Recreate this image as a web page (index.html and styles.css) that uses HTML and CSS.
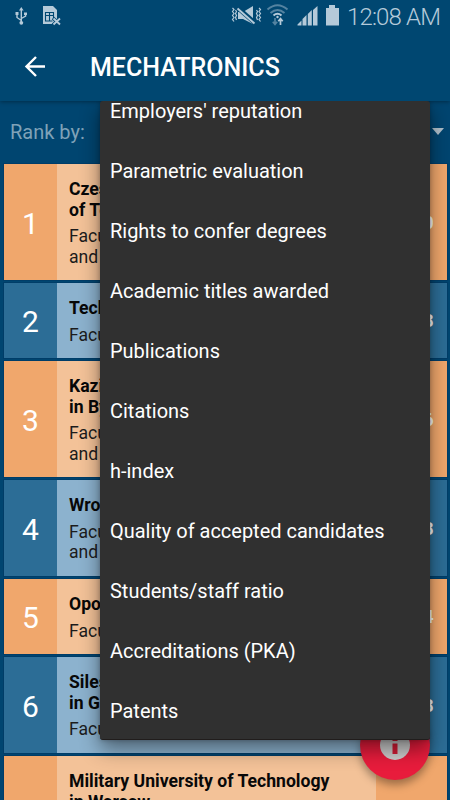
FILE: index.html
```html
<!DOCTYPE html>
<html lang="en">
<head>
<meta charset="utf-8">
<title>Mechatronics</title>
<link rel="stylesheet" href="styles.css">
</head>
<body>
<div class="screen">
  <header class="header">
    <div class="status">
      <svg class="status-left" width="64" height="32" viewBox="0 0 64 32" fill="none" stroke="#b5cad9" stroke-width="1.4">
        <path d="M21.3 10v13M21.3 20.5l-4.3-3v-3.5M21.3 18.5l4.3-2.500v-3"/>
        <path d="M21.300 7l2.300 3.500h-4.600zM15.500 12h3v3h-3zM24 12.500h3v2.500h-3z" fill="#b5cad9" stroke="none"/>
        <circle cx="21.300" cy="22.800" r="1.900" fill="#b5cad9" stroke="none"/>
        <path d="M43 6h10l4 4v9l-4 5H43z" fill="#b5cad9" stroke="none"/>
        <path d="M45.500 12.500h8.500M45.500 12v9.500M45.500 15.500h8M45.500 21h7M49.500 13v8M53.500 12v6" stroke="#004771" stroke-width="1.100"/>
        <path d="M53 18l7 7M60 18l-7 7" stroke="#004771" stroke-width="3.500"/>
        <path d="M53.500 18.500l6.500 6M60 18.500l-6.500 6" stroke-width="1.900"/>
      </svg>
      <div class="status-right">
        <svg width="115" height="32" viewBox="230 0 115 32" fill="none" stroke="#b5cad9">
          <path d="M232.500 8l1.500 1.500-1.500 2 1.500 2-1.500 2 1.500 2-1.500 2 1.500 2M235.500 10l1 1.500-1 2 1 2-1 2 1 2.500M256.500 10l1 1.500-1 2 1 2-1 2 1 2.500M259 8l1.500 1.500-1.500 2 1.500 2-1.500 2 1.500 2-1.500 2 1.500 2" stroke-width="1.200"/>
          <path d="M238 12h5l10-6v18l-10-5h-5z" fill="#b5cad9" stroke="none"/>
          <path d="M238.500 8.500l16 14" stroke="#004771" stroke-width="4.500"/>
          <path d="M237.500 8.500l17 15" stroke-width="1.900"/>
          <path d="M267.500 9.500q10-8.500 20 0" stroke="#5483a1" stroke-width="2"/>
          <path d="M270.500 13q7-6 14 0" stroke="#5483a1" stroke-width="2"/>
          <path d="M273.500 15.500q4-3.500 8 0" stroke-width="2"/>
          <circle cx="277.500" cy="17" r="1.200" fill="#b5cad9" stroke="none"/>
          <path d="M275 18v6M272.800 21.800l2.200 2.700 2.200-2.700" stroke="#5483a1" stroke-width="1.700"/>
          <path d="M280.500 25v-6M278.300 21.200l2.200-2.700 2.200 2.700" stroke-width="1.700"/>
          <path d="M297.500 25.500v-1l4-4v5zM302.500 25.500v-6.500l4-4v10.500zM307.800 25.500v-11.500l4-4v15.500zM313 25.500v-15.500l4.500-4v19.500z" fill="#b5cad9" stroke="none"/>
          <path d="M326 8h3V5h6v3h4v17.500h-13z" fill="#b5cad9" stroke="none"/>
        </svg>
        <span class="clock">12:08 AM</span>
      </div>
    </div>
    <div class="toolbar">
      <svg class="back" width="22" height="22" viewBox="0 0 22 22" fill="none" stroke="#fff" stroke-width="2.400"><path d="M21 10.500H3M12 1L2.500 10.500l9.500 9.500"/></svg>
      <h1>MECHATRONICS</h1>
    </div>
  </header>
  <div class="rankby"><span>Rank by:</span><i class="caret"></i></div>
  <main class="list">
    <article class="row orange r3"><div class="rank">1</div><div class="info"><h2>Czestochowa<br>of Technology</h2><p>Faculty<br>and</p></div><div class="score">100.0</div></article>
    <article class="row blue r1"><div class="rank">2</div><div class="info"><h2>Technical</h2><p>Faculty</p></div><div class="score">98.8</div></article>
    <article class="row orange r3"><div class="rank">3</div><div class="info"><h2>Kazimierz<br>in Bydgoszcz</h2><p>Faculty<br>and</p></div><div class="score">97.6</div></article>
    <article class="row blue r2"><div class="rank">4</div><div class="info"><h2>Wroclaw</h2><p>Faculty<br>and</p></div><div class="score">95.8</div></article>
    <article class="row orange r1"><div class="rank">5</div><div class="info"><h2>Opole</h2><p>Faculty</p></div><div class="score">94.4</div></article>
    <article class="row blue r2"><div class="rank">6</div><div class="info"><h2>Silesian<br>in Gliwice</h2><p>Faculty</p></div><div class="score">93.8</div></article>
    <article class="row orange r3"><div class="rank"></div><div class="info"><h2>Military University of Technology<br>in Warsaw</h2></div><div class="score"></div></article>
  </main>
  <div class="fab">
    <svg width="30" height="30" viewBox="0 0 30 30"><circle cx="15" cy="15" r="15" fill="#ccc"/><path d="M12.500 7h5v4h-5zM12.500 13.500h5V24h-5z" fill="#d01c35"/></svg>
  </div>
  <div class="menu-clip">
  <ul class="menu">
    <li>Employers' reputation</li>
    <li>Parametric evaluation</li>
    <li>Rights to confer degrees</li>
    <li>Academic titles awarded</li>
    <li>Publications</li>
    <li>Citations</li>
    <li>h-index</li>
    <li>Quality of accepted candidates</li>
    <li>Students/staff ratio</li>
    <li>Accreditations (PKA)</li>
    <li>Patents</li>
  </ul>
  </div>
</div>
</body>
</html>
```
FILE: styles.css
```css
* { box-sizing: border-box; }
body, h1, h2, p, ul { margin: 0; padding: 0; }
body { font-family: Roboto, "Liberation Sans", sans-serif; overflow: hidden; }
.screen { position: relative; width: 450px; height: 800px; overflow: hidden; background: #004570; }
.header { height: 101px; background: #004771; box-shadow: 0 1px 4px rgba(0, 0, 0, .35); }
.status { height: 32px; display: flex; justify-content: space-between; }
.status-right { display: flex; width: 220px; }
.status-right svg { flex: none; }
.clock { margin-left: 2px; font-size: 24px; line-height: 34px; font-weight: 300; letter-spacing: -.85px; color: #b5cad9; white-space: nowrap; }
.toolbar { height: 69px; display: flex; align-items: center; padding-left: 24px; color: #fff; }
.toolbar h1 { margin-left: 44px; padding-top: 2px; font-size: 25px; font-weight: 500; line-height: 30px; }
.rankby { height: 62.500px; display: flex; align-items: center; justify-content: space-between; padding: 0 6px 1px 10px; font-size: 20px; color: #7fa2b8; }
.caret { border: 6.500px solid transparent; border-top: 7px solid #b0c0cb; border-bottom: 0; margin-top: -1px; }
.list { display: flex; flex-direction: column; gap: 3px; padding: 0 3.500px 0 4px; }
.row { display: flex; flex: none; outline: 1px solid #003d68; }
.r1 { height: 75px; }
.r2 { height: 96px; }
.r3 { height: 116px; }
.orange { background: #f0a76c; }
.blue { background: #2c6d96; }
.rank { width: 53px; flex: none; display: flex; align-items: center; justify-content: center; padding-top: 3px; font-size: 30px; color: #fff; }
.info { width: 318.500px; flex: none; padding: 15.700px 0 0 12px; white-space: nowrap; }
.orange .info { background: #f3c298; }
.blue .info { background: #8cb2ce; }
.info h2 { font-size: 17.600px; line-height: 20.500px; font-weight: 700; color: #080808; }
.info p { margin-top: 6px; font-size: 17.600px; line-height: 20.500px; color: #1c1c1c; }
.score { flex: 1; display: flex; align-items: center; justify-content: flex-end; padding: 1px 13px 0 0; font-size: 18px; font-weight: 700; color: #fff; }
.fab { position: absolute; left: 360px; top: 710px; width: 70px; height: 70px; border-radius: 50%; background: #e81c3c; display: flex; align-items: center; justify-content: center; box-shadow: 0 5px 9px rgba(0, 0, 0, .35); }
.menu-clip { position: absolute; left: 60px; top: 101px; width: 390px; height: 699px; overflow: hidden; }
.menu { width: 330px; height: 639px; margin-left: 40px; overflow: hidden; padding-left: 10px; list-style: none; background: #303030; border-radius: 3px; border-bottom: 1px solid #211d1c; box-shadow: 0 9px 20px rgba(0, 0, 0, .45), 0 0 4px rgba(0, 0, 0, .25); color: #fff; font-size: 19.980px; }
.menu li { height: 60px; line-height: 60px; white-space: nowrap; }
.menu li:first-child { margin-top: -20px; }
```
